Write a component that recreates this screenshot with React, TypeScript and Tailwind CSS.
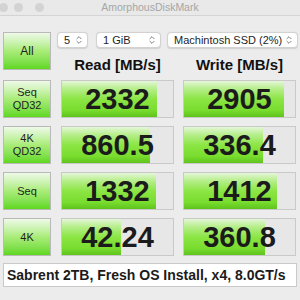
import { ChevronsUpDown } from 'lucide-react';

type Result = { read: string; readPct: number; write: string; writePct: number };

const rows: { label: string[]; result: Result }[] = [
  { label: ['Seq', 'QD32'], result: { read: '2332', readPct: 86, write: '2905', writePct: 90 } },
  { label: ['4K', 'QD32'], result: { read: '860.5', readPct: 79, write: '336.4', writePct: 71 } },
  { label: ['Seq'], result: { read: '1332', readPct: 85, write: '1412', writePct: 84 } },
  { label: ['4K'], result: { read: '42.24', readPct: 53, write: '360.8', writePct: 73 } },
];

const greenButton =
  'flex flex-col items-center justify-center border border-[#b9b9b9] bg-gradient-to-b from-[#eef9e8] via-[#a9ec78] to-[#5fd81a] text-[#1e1e1e]';

function Select({ value, width }: { value: string; width: string }) {
  return (
    <div
      className={`${width} flex h-[16px] items-center justify-between rounded-[4px] border border-[#d2d2d2] bg-white pl-[6px] pr-[3px] text-[11px] text-[#1e1e1e] shadow-[0_0.5px_1px_rgba(0,0,0,0.12)]`}
    >
      <span className="leading-none">{value}</span>
      <ChevronsUpDown className="h-[10px] w-[10px] text-[#444]" strokeWidth={1.6} />
    </div>
  );
}

function ResultCell({ value, pct }: { value: string; pct: number }) {
  return (
    <div className="relative flex h-[38px] w-[113px] items-center justify-center overflow-hidden border border-[#c9c9c9] bg-[#e7e7e7]">
      <div
        className="absolute left-0 top-0 h-full bg-[linear-gradient(to_bottom,#e4f6d8_0%,#b6ee8a_22%,#8ce544_50%,#78dc2e_82%,#5ec31c_100%)]"
        style={{ width: `${pct}%` }}
      />
      <span className="relative text-[29px] font-bold leading-none text-[#1b1b1b]">{value}</span>
    </div>
  );
}

export default function App() {
  return (
    <div className="h-[300px] w-[300px] overflow-hidden bg-[#ececec] font-['Liberation_Sans',Arial,sans-serif]">
      <div className="relative flex h-[16px] items-center border-b border-[#d4d4d4] bg-[#e9e9e9]">
        <div className="ml-[-1px] flex items-center gap-[6px]">
          <span className="h-[9px] w-[9px] rounded-full bg-[#d3d3d3]" />
          <span className="h-[9px] w-[9px] rounded-full bg-[#d3d3d3]" />
          <span className="ml-[6px] h-[9px] w-[9px] rounded-full bg-[#d3d3d3]" />
        </div>
        <span className="absolute left-0 right-0 text-center text-[10.5px] text-[#a6a6a6]">AmorphousDiskMark</span>
      </div>

      <div className="flex flex-col gap-[8px] pl-[3px] pt-[16px]">
        <div className="flex">
          <div className={`${greenButton} h-[38px] w-[48px] text-[12px]`}>All</div>
          <div className="ml-[6px] flex flex-col">
            <div className="flex gap-[8px]">
              <Select value="5" width="w-[31px]" />
              <Select value="1 GiB" width="w-[65px]" />
              <Select value="Machintosh SSD (2%)" width="w-[131px] ml-[-2px]" />
            </div>
            <div className="mt-[9px] flex">
              <div className="ml-[4px] w-[113px] text-center text-[15px] font-bold leading-[15px] text-[#111]">Read [MB/s]</div>
              <div className="ml-[9px] w-[113px] text-center text-[15px] font-bold leading-[15px] text-[#111]">Write [MB/s]</div>
            </div>
          </div>
        </div>

        {rows.map((row, i) => (
          <div key={i} className="flex">
            <div className={`${greenButton} h-[38px] w-[48px] text-[11px] leading-[13px]`}>
              {row.label.map((l) => (
                <span key={l}>{l}</span>
              ))}
            </div>
            <div className="ml-[10px]">
              <ResultCell value={row.result.read} pct={row.result.readPct} />
            </div>
            <div className="ml-[9px]">
              <ResultCell value={row.result.write} pct={row.result.writePct} />
            </div>
          </div>
        ))}

        <div className="mt-[-1px] flex h-[24px] w-[294px] items-center border border-[#c9c9c9] bg-white pl-[3px] text-[14px] font-bold text-[#1b1b1b]">
          Sabrent 2TB, Fresh OS Install, x4, 8.0GT/s
        </div>
      </div>
    </div>
  );
}
